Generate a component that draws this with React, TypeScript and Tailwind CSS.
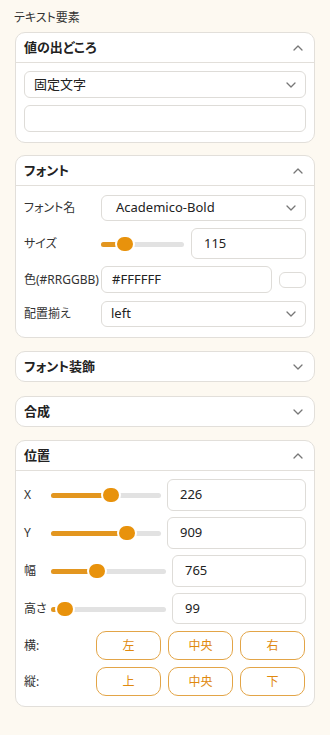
import React from 'react'

const FONT = { fontFamily: '"Noto Sans", "Noto Sans CJK JP", sans-serif' }

const Chevron = ({ up = false }: { up?: boolean }) => (
  <svg width="10" height="6" viewBox="0 0 10 6" className="text-[#777]">
    <polyline
      points={up ? '1,5 5,1 9,5' : '1,1 5,5 9,1'}
      fill="none"
      stroke="currentColor"
      strokeWidth="1.3"
      strokeLinecap="round"
      strokeLinejoin="round"
    />
  </svg>
)

const Card = ({
  title,
  open = false,
  className = '',
  children,
}: {
  title: string
  open?: boolean
  className?: string
  children?: React.ReactNode
}) => (
  <div className={`rounded-[10px] border border-[#e2dfda] bg-white ${className}`}>
    <div
      className={`flex h-[29px] items-center justify-between pl-[8px] pr-[11px] ${
        open ? 'h-[30px] border-b border-[#e2dfda]' : ''
      }`}
    >
      <span className="text-[13px] font-semibold text-[#222]">{title}</span>
      <Chevron up={open} />
    </div>
    {children}
  </div>
)

const Select = ({ value, className = '', textClass = 'pl-[9px]' }: { value: string; className?: string; textClass?: string }) => (
  <div className={`flex items-center justify-between rounded-[6px] border border-[#dedcd8] bg-white pr-[9px] ${className}`}>
    <span className={`text-[13px] text-[#222] ${textClass}`}>{value}</span>
    <Chevron />
  </div>
)

const Input = ({ value, className = '', textClass = 'pl-[12px]' }: { value?: string; className?: string; textClass?: string }) => (
  <div className={`flex items-center rounded-[6px] border border-[#dedcd8] bg-white ${className}`}>
    <span className={`text-[13px] text-[#222] ${textClass}`}>{value}</span>
  </div>
)

const Slider = ({ width, pos }: { width: number; pos: number }) => (
  <div className="relative h-[14px] shrink-0" style={{ width }}>
    <div className="absolute left-0 right-0 top-[5px] h-[5px] rounded-full bg-[#e2e2e2]" />
    <div className="absolute left-0 top-[5px] h-[5px] rounded-full bg-[#e3961f]" style={{ width: pos }} />
    <div
      className="absolute top-0 h-[14px] w-[16px] rounded-full bg-[#e8920c] ring-2 ring-white"
      style={{ left: pos - 8 }}
    />
  </div>
)

const Label = ({ children, className = '' }: { children: React.ReactNode; className?: string }) => (
  <span className={`shrink-0 text-[12px] text-[#333] ${className}`}>{children}</span>
)

const SliderRow = ({ label, slider, pos, value, h = 32 }: { label: string; slider: number; pos: number; value: string; h?: number }) => (
  <div className="flex items-center" style={{ height: h }}>
    <Label className="w-[27px]">{label}</Label>
    <Slider width={slider} pos={pos} />
    <Input value={value} className="ml-[6px] h-full flex-1" />
  </div>
)

const AlignBtn = ({ children }: { children: React.ReactNode }) => (
  <button className="flex h-[29px] w-[65px] items-center justify-center rounded-[10px] border border-[#e3a547] bg-white text-[12px] text-[#e0890e]">
    {children}
  </button>
)

export default function App() {
  return (
    <div className="min-h-screen bg-[#fdf9f1] px-[15px] pt-[9px] [font-feature-settings:'palt']" style={FONT}>
      <div className="-ml-px text-[12px] leading-[18px] text-[#333]">テキスト要素</div>

      <Card title="値の出どころ" open className="mt-[5px]">
        <div className="flex flex-col gap-[7px] px-[8px] pb-[10px] pt-[8px]">
          <Select value="固定文字" className="h-[27px]" />
          <Input className="h-[27px]" />
        </div>
      </Card>

      <Card title="フォント" open className="mt-[12px]">
        <div className="flex flex-col px-[8px] pb-[10px] pt-[9px]">
          <div className="flex h-[26px] items-center">
            <Label className="w-[77px]">フォント名</Label>
            <Select value="Academico-Bold" className="h-[26px] flex-1" textClass="pl-[14px]" />
          </div>
          <div className="mt-[7px] flex h-[31px] items-center">
            <Label className="w-[77px]">サイズ</Label>
            <Slider width={83} pos={24} />
            <Input value="115" className="ml-[7px] h-[31px] flex-1" />
          </div>
          <div className="mt-[7px] flex h-[27px] items-center">
            <Label className="w-[77px]">色(#RRGGBB)</Label>
            <Input value="#FFFFFF" className="h-[27px] flex-1" textClass="pl-[10px]" />
            <div className="ml-[7px] h-[16px] w-[27px] rounded-[6px] border border-[#dedcd8] bg-white" />
          </div>
          <div className="mt-[8px] flex h-[26px] items-center">
            <Label className="w-[77px]">配置揃え</Label>
            <Select value="left" className="h-[26px] flex-1" textClass="pl-[9px]" />
          </div>
        </div>
      </Card>

      <Card title="フォント装飾" className="mt-[13px]" />
      <Card title="合成" className="mt-[14px]" />

      <Card title="位置" open className="mt-[13px]">
        <div className="flex flex-col gap-[6px] px-[8px] pb-[10px] pt-[8px]">
          <SliderRow label="X" slider={110} pos={60} value="226" />
          <SliderRow label="Y" slider={110} pos={76} value="909" />
          <SliderRow label="幅" slider={115} pos={46} value="765" />
          <SliderRow label="高さ" slider={115} pos={14} value="99" h={31} />
          <div className="mt-px flex h-[29px] items-center">
            <Label className="w-[72px]">横:</Label>
            <div className="flex gap-[7px]">
              <AlignBtn>左</AlignBtn>
              <AlignBtn>中央</AlignBtn>
              <AlignBtn>右</AlignBtn>
            </div>
          </div>
          <div className="mt-px flex h-[29px] items-center">
            <Label className="w-[72px]">縦:</Label>
            <div className="flex gap-[7px]">
              <AlignBtn>上</AlignBtn>
              <AlignBtn>中央</AlignBtn>
              <AlignBtn>下</AlignBtn>
            </div>
          </div>
        </div>
      </Card>
    </div>
  )
}
